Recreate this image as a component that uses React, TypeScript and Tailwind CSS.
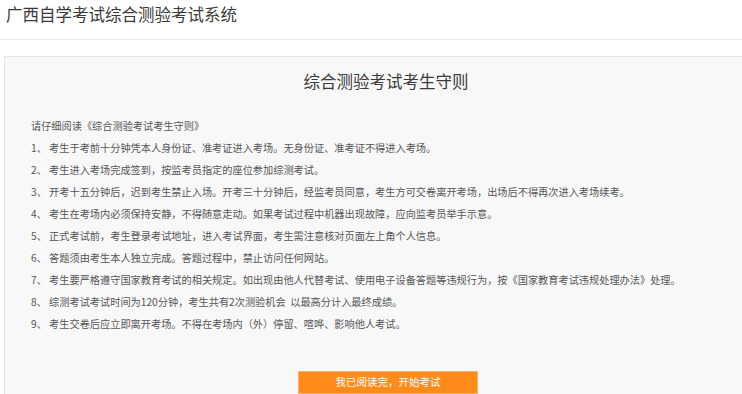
const rules = [
  "1、 考生于考前十分钟凭本人身份证、准考证进入考场。无身份证、准考证不得进入考场。",
  "2、 考生进入考场完成签到，按监考员指定的座位参加综测考试。",
  "3、 开考十五分钟后，迟到考生禁止入场。开考三十分钟后，经监考员同意，考生方可交卷离开考场，出场后不得再次进入考场续考。",
  "4、 考生在考场内必须保持安静，不得随意走动。如果考试过程中机器出现故障，应向监考员举手示意。",
  "5、 正式考试前，考生登录考试地址，进入考试界面，考生需注意核对页面左上角个人信息。",
  "6、 答题须由考生本人独立完成。答题过程中，禁止访问任何网站。",
  "7、 考生要严格遵守国家教育考试的相关规定。如出现由他人代替考试、使用电子设备答题等违规行为，按《国家教育考试违规处理办法》处理。",
  "8、 综测考试考试时间为120分钟，考生共有2次测验机会  以最高分计入最终成绩。",
  "9、 考生交卷后应立即离开考场。不得在考场内（外）停留、喧哗、影响他人考试。",
];

export default function App() {
  return (
    <div
      className="w-[742px] h-[394px] overflow-hidden bg-white text-[#333]"
      style={{ fontFamily: '"Microsoft YaHei", "Noto Sans CJK SC", sans-serif' }}
    >
      {/* header */}
      <div className="h-[40px] px-[6px] flex items-center border-b border-[#e8e8e8]">
        <h1 className="text-[16.5px] leading-none -mt-[11px] text-[#3a3a3a]">广西自学考试综合测验考试系统</h1>
      </div>

      {/* rules panel */}
      <div className="pt-[16px] pl-[4px] -mr-[26px]">
        <div className="border border-[#e6e6e6] bg-[#f8f8f8] flex flex-col">
          <h2 className="text-center text-[16.5px] leading-none text-[#3a3a3a] pt-[16px] pb-[25px]">
            综合测验考试考生守则
          </h2>
          <div className="pl-[26px] flex flex-col text-[10.2px] leading-[22px] text-[#555]">
            <p>请仔细阅读《综合测验考试考生守则》</p>
            {rules.map((r) => (
              <p key={r} className="whitespace-pre">
                {r}
              </p>
            ))}
          </div>
          <div className="flex justify-center pt-[36px] pl-[4px] pb-[30px]">
            <button className="w-[180px] h-[23px] bg-[#ff8c1a] text-white text-[10.5px] leading-none border border-[#ffb066]">
              我已阅读完，开始考试
            </button>
          </div>
        </div>
      </div>
    </div>
  );
}
